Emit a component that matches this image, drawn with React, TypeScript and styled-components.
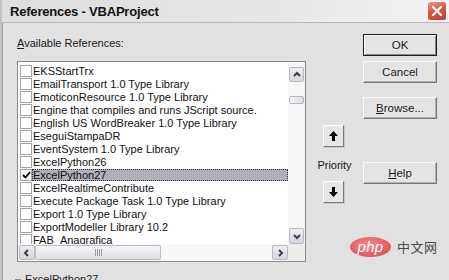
import styled, { createGlobalStyle } from "styled-components";

const GlobalStyle = createGlobalStyle`
  html, body { margin: 0; padding: 0; }
  body {
    background: #e1e1e1;
    font-family: "Liberation Sans", Arial, sans-serif;
    font-size: 11px;
    color: #000;
  }
`;

const Dialog = styled.div`
  position: relative;
  width: 449px;
  height: 280px;
  overflow: hidden;
  box-sizing: border-box;
  background: #e1e1e1;
  border-left: 2px solid #c4c4c4;
  display: flex;
  flex-direction: column;
`;

const TitleBar = styled.div`
  height: 23px;
  flex: none;
  box-sizing: border-box;
  display: flex;
  align-items: center;
  justify-content: space-between;
  padding: 0 2px 0 8px;
  background: linear-gradient(to right, #dedede 0%, #e6e6e6 60%, #f3f3f3 100%);
  border-bottom: 1px solid #b9b9b9;
`;

const Title = styled.span`
  font-weight: bold;
  font-size: 13px;
  letter-spacing: -0.2px;
  color: #111;
`;

const CloseButton = styled.div`
  width: 20px;
  height: 20px;
  box-sizing: border-box;
  border: 1px solid #f4f4f4;
  border-radius: 3px;
  background: linear-gradient(160deg, #ee9a8c 0%, #d9574a 45%, #c43f33 100%);
  display: flex;
  align-items: center;
  justify-content: center;
`;

const Body = styled.div`
  flex: 1;
  min-height: 0;
  display: flex;
  padding-top: 11px;
  border-left: 1px solid #9c9c9c;
`;

const LeftColumn = styled.div`
  width: 289px;
  margin-left: 14px;
  display: flex;
  flex-direction: column;
`;

const Caption = styled.div`
  flex: none;
  margin-top: 2px;
  line-height: 14px;
  height: 14px;
  color: #1a1a1a;
`;

const Key = styled.span`
  text-decoration: underline;
  text-underline-offset: 1px;
`;

const ListBox = styled.div`
  flex: none;
  margin-top: 11px;
  width: 289px;
  height: 201px;
  box-sizing: border-box;
  border: 1px solid #8a8a8a;
  background: #fff;
  display: grid;
  grid-template-columns: 1fr 17px;
  grid-template-rows: 182px 17px;
`;

const Items = styled.div`
  overflow: hidden;
  min-height: 0;
  padding: 2px 0 0 2px;
`;

const Row = styled.div`
  height: 13px;
  display: flex;
  align-items: center;
`;

const Check = styled.span`
  width: 12px;
  height: 12px;
  box-sizing: border-box;
  border: 1px solid #a3a3a3;
  background: #fff;
  flex: none;
  display: flex;
  align-items: center;
  justify-content: center;
`;

const ItemText = styled.span<{ $selected?: boolean }>`
  flex: 1;
  height: 12px;
  line-height: 12px;
  padding-left: 1px;
  white-space: nowrap;
  color: #111;
  background: ${({ $selected }) => ($selected ? "#b0b0b8" : "transparent")};
  outline: ${({ $selected }) => ($selected ? "1px dotted #333" : "none")};
  outline-offset: -1px;
`;

const VScroll = styled.div`
  background: #f7f7f7;
  display: flex;
  flex-direction: column;
  align-items: center;
  padding-top: 5px;
  min-height: 0;
`;

const HScroll = styled.div`
  background: #f7f7f7;
  display: flex;
  align-items: center;
  padding-left: 1px;
`;

const Corner = styled.div`
  background: #ececec;
`;

const ScrollButton = styled.div<{ $w: number; $h: number }>`
  width: ${({ $w }) => $w}px;
  height: ${({ $h }) => $h}px;
  box-sizing: border-box;
  flex: none;
  border: 1px solid #b9b9c3;
  border-radius: 2px;
  background: linear-gradient(#eeeef2, #d4d4dc);
  display: flex;
  align-items: center;
  justify-content: center;
`;

const Track = styled.div`
  flex: 1;
  display: flex;
`;

const VThumb = styled.div`
  width: 15px;
  height: 8px;
  margin-top: 14px;
  box-sizing: border-box;
  border: 1px solid #b7b7bf;
  border-radius: 2px;
  background: linear-gradient(to right, #f4f4f6, #dcdce2);
`;

const HThumb = styled.div`
  width: 126px;
  height: 15px;
  box-sizing: border-box;
  border: 1px solid #bdbdc5;
  border-radius: 2px;
  background: linear-gradient(#f6f6f8, #dedee4);
  display: flex;
  align-items: center;
  justify-content: center;
  gap: 1px;
`;

const Grip = styled.span`
  width: 1px;
  height: 7px;
  background: #9a9aa4;
`;

const GroupLine = styled.div`
  flex: none;
  margin-top: 10px;
  display: flex;
  align-items: center;
  gap: 4px;
  margin-left: -2px;
  line-height: 14px;
  color: #222;
`;

const Dash = styled.span`
  width: 6px;
  height: 1px;
  background: #8c8c8c;
`;

const MiddleColumn = styled.div`
  width: 57px;
  display: flex;
  flex-direction: column;
  align-items: center;
  padding-top: 91px;
`;

const ArrowButton = styled.div<{ $gap?: number }>`
  width: 21px;
  height: 22px;
  margin-top: ${({ $gap }) => $gap ?? 0}px;
  margin-right: 2px;
  box-sizing: border-box;
  background: #e6e6e6;
  border: 1px solid;
  border-color: #fff #7c7c7c #7c7c7c #fff;
  box-shadow: 1px 1px 0 #c8c8c8;
  display: flex;
  align-items: center;
  justify-content: center;
`;

const PriorityLabel = styled.div`
  margin-top: 11px;
  line-height: 14px;
  color: #1a1a1a;
`;

const RightColumn = styled.div`
  display: flex;
  flex-direction: column;
`;

const Button = styled.div<{ $gap?: number; $default?: boolean }>`
  width: 74px;
  height: 22px;
  flex: none;
  margin-top: ${({ $gap }) => $gap ?? 0}px;
  box-sizing: border-box;
  background: #e4e4e4;
  border: 1px solid;
  border-color: ${({ $default }) =>
    $default ? "#1e1e1e" : "#fbfbfb #777 #777 #fbfbfb"};
  box-shadow: ${({ $default }) =>
    $default ? "inset 1px 1px 0 #fff, inset -1px -1px 0 #888" : "inset -1px -1px 0 #b0b0b0"};
  display: flex;
  align-items: center;
  justify-content: center;
  font-size: 11.5px;
  color: #1a1a1a;
`;

const Watermark = styled.div`
  position: absolute;
  left: 348px;
  top: 237px;
  display: flex;
  align-items: center;
  gap: 6px;
`;

const PhpBadge = styled.div`
  width: 41px;
  height: 20px;
  border-radius: 50%;
  background: radial-gradient(ellipse at 45% 40%, #f08a8c 0%, #e2575c 70%, #d84a50 100%);
  display: flex;
  align-items: center;
  justify-content: center;
  color: #fff;
  font-style: italic;
  font-size: 15px;
  line-height: 20px;
  letter-spacing: 0.3px;
`;

const Cjk = styled.span`
  font-family: "Noto Sans CJK SC", "Liberation Sans", sans-serif;
  font-size: 13px;
  line-height: 20px;
  color: #4a4a4a;
  letter-spacing: 0.5px;
`;

const refs = [
  "EKSStartTrx",
  "EmailTransport 1.0 Type Library",
  "EmoticonResource 1.0 Type Library",
  "Engine that compiles and runs JScript source.",
  "English US WordBreaker 1.0 Type Library",
  "EseguiStampaDR",
  "EventSystem 1.0 Type Library",
  "ExcelPython26",
  "ExcelPython27",
  "ExcelRealtimeContribute",
  "Execute Package Task 1.0 Type Library",
  "Export 1.0 Type Library",
  "ExportModeller Library 10.2",
  "FAB_Anagrafica",
];

const Chevron = ({ dir }: { dir: "up" | "down" | "left" | "right" }) => {
  const pts = {
    up: "2,6 5,3 8,6",
    down: "2,3 5,6 8,3",
    left: "6,2 3,5 6,8",
    right: "4,2 7,5 4,8",
  }[dir];
  return (
    <svg width="10" height="9" viewBox="0 0 10 9">
      <polyline points={pts} fill="none" stroke="#3c3c48" strokeWidth="2" />
    </svg>
  );
};

const Arrow = ({ down }: { down?: boolean }) => (
  <svg width="9" height="10" viewBox="0 0 9 10" style={{ transform: down ? "rotate(180deg)" : undefined }}>
    <polygon points="4.5,0 9,5 6,5 6,10 3,10 3,5 0,5" fill="#000" />
  </svg>
);

function App() {
  return (
    <Dialog>
      <GlobalStyle />
      <TitleBar>
        <Title>References - VBAProject</Title>
        <CloseButton>
          <svg width="12" height="12" viewBox="0 0 12 12">
            <path d="M2 2 L10 10 M10 2 L2 10" stroke="#fff" strokeWidth="2.2" strokeLinecap="round" />
          </svg>
        </CloseButton>
      </TitleBar>

      <Body>
        <LeftColumn>
          <Caption>
            <Key>A</Key>vailable References:
          </Caption>
          <ListBox>
            <Items>
              {refs.map((name) => (
                <Row key={name}>
                  <Check>
                    {name === "ExcelPython27" && (
                      <svg width="9" height="8" viewBox="0 0 9 8">
                        <polyline points="1,4 3.5,6.5 8,1" fill="none" stroke="#000" strokeWidth="1.8" />
                      </svg>
                    )}
                  </Check>
                  <ItemText $selected={name === "ExcelPython27"}>{name}</ItemText>
                </Row>
              ))}
            </Items>
            <VScroll>
              <ScrollButton $w={15} $h={15}>
                <Chevron dir="up" />
              </ScrollButton>
              <Track>
                <VThumb />
              </Track>
              <ScrollButton $w={15} $h={16}>
                <Chevron dir="down" />
              </ScrollButton>
            </VScroll>
            <HScroll>
              <ScrollButton $w={16} $h={15}>
                <Chevron dir="left" />
              </ScrollButton>
              <Track>
                <HThumb>
                  <Grip />
                  <Grip />
                  <Grip />
                  <Grip />
                </HThumb>
              </Track>
              <ScrollButton $w={16} $h={15}>
                <Chevron dir="right" />
              </ScrollButton>
            </HScroll>
            <Corner />
          </ListBox>
          <GroupLine>
            <Dash />
            ExcelPython27
          </GroupLine>
        </LeftColumn>

        <MiddleColumn>
          <ArrowButton>
            <Arrow />
          </ArrowButton>
          <PriorityLabel>Priority</PriorityLabel>
          <ArrowButton $gap={9}>
            <Arrow down />
          </ArrowButton>
        </MiddleColumn>

        <RightColumn>
          <Button $default>OK</Button>
          <Button $gap={5}>Cancel</Button>
          <Button $gap={14}>
            <span>
              <Key>B</Key>rowse...
            </span>
          </Button>
          <Button $gap={43}>
            <span>
              <Key>H</Key>elp
            </span>
          </Button>
        </RightColumn>
      </Body>

      <Watermark>
        <PhpBadge>php</PhpBadge>
        <Cjk>中文网</Cjk>
      </Watermark>
    </Dialog>
  );
}

export default App;
